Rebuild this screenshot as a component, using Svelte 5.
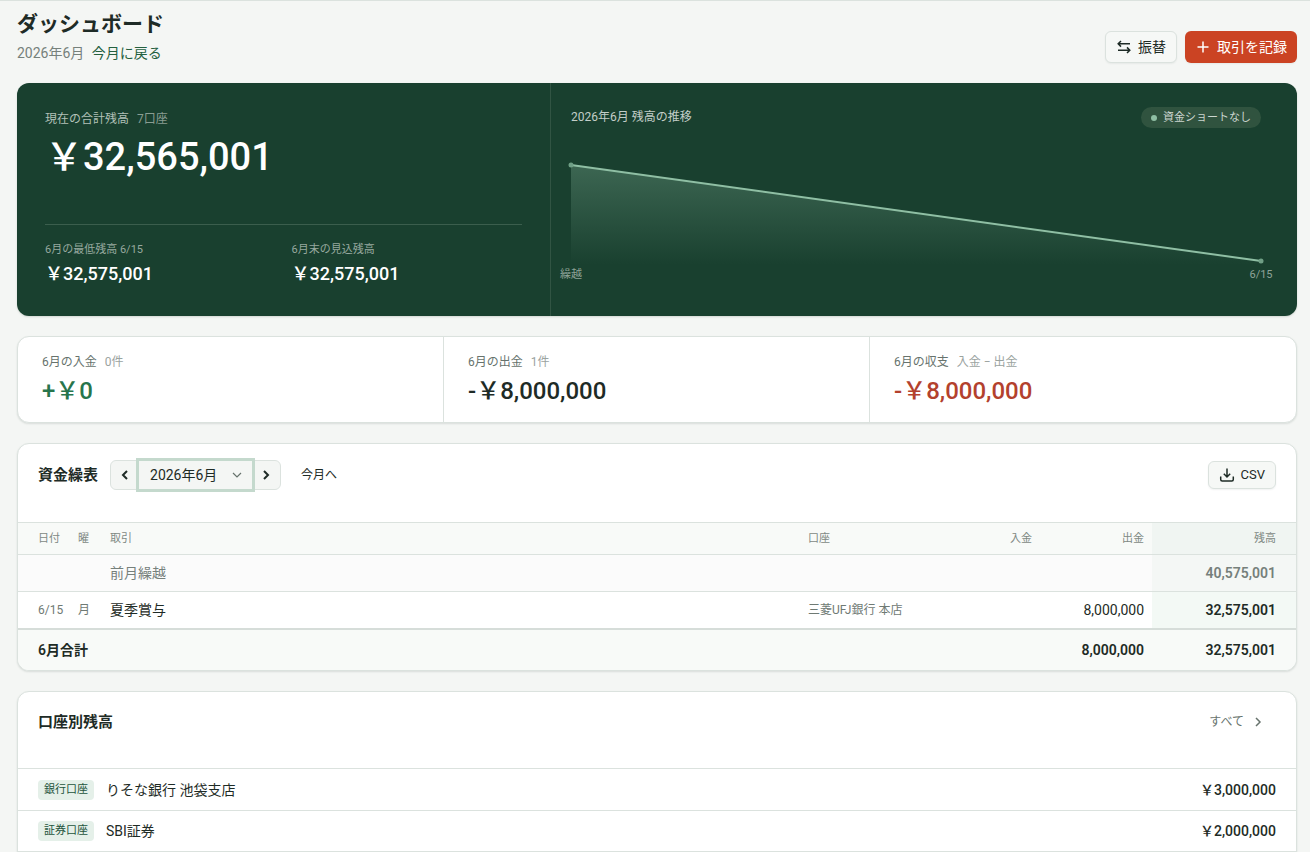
<script lang="ts">
    interface Entry {
        date: string;
        weekday: string;
        title: string;
        account: string;
        income: string;
        expense: string;
        balance: string;
    }

    const months = ["2026年6月"];
    let month = $state("2026年6月");
    let chartWidth = $state(690);

    const lows = [
        { label: "6月の最低残高", note: "6/15", value: "￥32,575,001" },
        { label: "6月末の見込残高", note: "", value: "￥32,575,001" }
    ];

    const stats = [
        { label: "6月の入金", note: "0件", value: "+￥0", tone: "plus" },
        { label: "6月の出金", note: "1件", value: "-￥8,000,000", tone: "" },
        { label: "6月の収支", note: "入金 − 出金", value: "-￥8,000,000", tone: "minus" }
    ];

    const entries: Entry[] = [
        {
            date: "6/15",
            weekday: "月",
            title: "夏季賞与",
            account: "三菱UFJ銀行 本店",
            income: "",
            expense: "8,000,000",
            balance: "32,575,001"
        }
    ];

    const accounts = [
        { kind: "銀行口座", name: "りそな銀行 池袋支店", balance: "￥3,000,000" },
        { kind: "証券口座", name: "SBI証券", balance: "￥2,000,000" }
    ];

    // y positions inside the chart
    const startY = 37;
    const endY = 133;
    const baseY = 137;
</script>

<main>
    <header class="page-head">
        <div>
            <h1>ダッシュボード</h1>
            <p class="period">{month} <a href="#now">今月に戻る</a></p>
        </div>
        <div class="actions">
            <button class="btn">
                <svg width="16" height="16" viewBox="0 0 16 16" aria-hidden="true">
                    <path d="M14 4.8H2.5M5 2L2.2 4.8L5 7.6M2 11.2H13.5M11 8.4L13.8 11.2L11 14" />
                </svg>
                振替
            </button>
            <button class="btn primary">
                <svg width="16" height="16" viewBox="0 0 16 16" aria-hidden="true">
                    <path d="M8 2.5V13.5M2.5 8H13.5" />
                </svg>
                取引を記録
            </button>
        </div>
    </header>

    <section class="hero">
        <div class="total">
            <div>
                <p class="total-label">現在の合計残高 <span>7口座</span></p>
                <p class="total-value">￥32,565,001</p>
            </div>
            <div class="lows">
                {#each lows as low}
                    <div>
                        <p class="low-label">{low.label} <span>{low.note}</span></p>
                        <p class="low-value">{low.value}</p>
                    </div>
                {/each}
            </div>
        </div>
        <div class="trend">
            <div class="trend-head">
                <h2>{month} 残高の推移</h2>
                <span class="pill">資金ショートなし</span>
            </div>
            <div class="chart" bind:clientWidth={chartWidth}>
                <svg width={chartWidth} height="164" role="img" aria-label="残高の推移">
                    <defs>
                        <linearGradient id="fade" gradientUnits="userSpaceOnUse" x1="0" y1={startY} x2="0" y2={baseY}>
                            <stop offset="0" stop-color="#8fbfa4" stop-opacity="0.3" />
                            <stop offset="1" stop-color="#8fbfa4" stop-opacity="0" />
                        </linearGradient>
                    </defs>
                    <polygon points="0,{startY} {chartWidth},{endY} {chartWidth},{baseY} 0,{baseY}" fill="url(#fade)" />
                    <line x1="0" y1={startY} x2={chartWidth} y2={endY} />
                    <circle cx="0" cy={startY} r="2.5" />
                    <circle cx={chartWidth} cy={endY} r="2.5" />
                    <text x="0" y="150">繰越</text>
                    <text x={chartWidth} y="150">6/15</text>
                </svg>
            </div>
        </div>
    </section>

    <section class="card stats">
        {#each stats as stat}
            <div class="stat">
                <p class="stat-label">{stat.label} <span>{stat.note}</span></p>
                <p class="stat-value {stat.tone}">{stat.value}</p>
            </div>
        {/each}
    </section>

    <section class="card">
        <div class="card-head">
            <h2>資金繰表</h2>
            <div class="stepper">
                <button aria-label="前の月">
                    <svg width="14" height="14" viewBox="0 0 14 14"><path d="M9 3L5 7L9 11" /></svg>
                </button>
                <div class="month">
                    <select aria-label="表示する月" bind:value={month}>
                        {#each months as m}
                            <option value={m}>{m}</option>
                        {/each}
                    </select>
                    <svg width="14" height="14" viewBox="0 0 14 14" aria-hidden="true"><path d="M3 5L7 9L11 5" /></svg>
                </div>
                <button aria-label="次の月">
                    <svg width="14" height="14" viewBox="0 0 14 14"><path d="M5 3L9 7L5 11" /></svg>
                </button>
            </div>
            <button class="this-month">今月へ</button>
            <button class="btn small">
                <svg width="16" height="16" viewBox="0 0 16 16" aria-hidden="true">
                    <path d="M8 1.5V9.5M4.8 6.8L8 10L11.2 6.8M1.7 9.5V12.5Q1.7 14 3.2 14H12.8Q14.3 14 14.3 12.5V9.5" />
                </svg>
                CSV
            </button>
        </div>
        <table>
            <thead>
                <tr>
                    <th class="date">日付</th>
                    <th class="weekday">曜</th>
                    <th>取引</th>
                    <th class="account">口座</th>
                    <th class="num">入金</th>
                    <th class="num">出金</th>
                    <th class="num balance">残高</th>
                </tr>
            </thead>
            <tbody>
                <tr class="carry">
                    <td class="date"></td>
                    <td></td>
                    <td>前月繰越</td>
                    <td></td>
                    <td></td>
                    <td></td>
                    <td class="num balance">40,575,001</td>
                </tr>
                {#each entries as entry}
                    <tr>
                        <td class="date">{entry.date}</td>
                        <td class="weekday">{entry.weekday}</td>
                        <td>{entry.title}</td>
                        <td class="account">{entry.account}</td>
                        <td class="num">{entry.income}</td>
                        <td class="num">{entry.expense}</td>
                        <td class="num balance">{entry.balance}</td>
                    </tr>
                {/each}
            </tbody>
            <tfoot>
                <tr>
                    <th colspan="4" scope="row">6月合計</th>
                    <td></td>
                    <td class="num">8,000,000</td>
                    <td class="num balance">32,575,001</td>
                </tr>
            </tfoot>
        </table>
    </section>

    <section class="card accounts">
        <div class="card-head">
            <h2>口座別残高</h2>
            <a class="all" href="#accounts">
                すべて
                <svg width="16" height="16" viewBox="0 0 16 16" aria-hidden="true"><path d="M6 4L10 8L6 12" /></svg>
            </a>
        </div>
        <ul>
            {#each accounts as account}
                <li>
                    <span class="kind">{account.kind}</span>
                    <span class="name">{account.name}</span>
                    <span class="amount">{account.balance}</span>
                </li>
            {/each}
        </ul>
    </section>
</main>

<style>
    :global(body) {
        background: #f4f6f4;
        color: #1e2b26;
        font-family: Roboto, "Noto Sans CJK JP", sans-serif;
        font-size: 14px;
        line-height: 20px;
    }

    main {
        display: flex;
        flex-direction: column;
        gap: 20px;
        padding: 8px 13px 0 17px;
        border-top: 1px solid #dbe2de;
    }

    h1, h2, p, ul {
        margin: 0;
        padding: 0;
    }

    button, select {
        font: inherit;
        color: inherit;
        cursor: pointer;
    }

    a {
        color: #24603f;
        text-decoration: none;
    }

    svg {
        flex: none;
        fill: none;
        stroke: currentColor;
        stroke-width: 1.5;
    }

    .page-head {
        display: flex;
        justify-content: space-between;
        align-items: flex-end;
    }

    h1 {
        font-size: 21px;
        font-weight: 600;
        line-height: 30px;
    }

    .period {
        margin-top: 4px;
        color: #76817b;
    }

    .period a {
        margin-left: 4px;
    }

    .actions {
        display: flex;
        gap: 8px;
    }

    .btn {
        display: flex;
        align-items: center;
        gap: 6px;
        height: 32px;
        padding: 0 10px;
        border: 1px solid #dbe2de;
        border-radius: 6px;
        background: #f6f8f6;
        box-shadow: 0 1px 2px rgba(20, 40, 30, 0.06);
    }

    .btn.primary {
        border: none;
        background: #cb4323;
        color: #fff;
    }

    .btn.small {
        height: 28px;
        margin-left: auto;
        font-size: 13px;
    }

    .hero {
        display: grid;
        grid-template-columns: 5fr 7fr;
        border-radius: 12px;
        background: #19402f;
        color: #fff;
        box-shadow: 0 1px 2px rgba(20, 40, 30, 0.15);
    }

    .total {
        display: flex;
        flex-direction: column;
        justify-content: space-between;
        padding: 24px 28px 28px;
    }

    .total-label {
        font-size: 12px;
        line-height: 24px;
        color: #b2c0b8;
    }

    .total-label span {
        margin-left: 5px;
        color: #899d92;
    }

    .total-value {
        font-size: 38px;
        font-weight: 500;
        line-height: 52px;
    }

    .lows {
        display: grid;
        grid-template-columns: 1fr 1fr;
        gap: 16px;
        padding-top: 15px;
        border-top: 1px solid #3b5e4d;
    }

    .low-label {
        font-size: 11px;
        color: #97a99f;
    }

    .low-value {
        font-size: 18px;
        font-weight: 500;
        line-height: 28px;
    }

    .trend {
        padding: 24px 36px 24px 20px;
        border-left: 1px solid #315443;
    }

    .trend-head {
        display: flex;
        justify-content: space-between;
        height: 21px;
    }

    .trend-head h2 {
        font-size: 12px;
        font-weight: 400;
        color: #c3cec8;
    }

    .pill {
        display: flex;
        align-items: center;
        gap: 6px;
        padding: 0 10px;
        border-radius: 11px;
        background: #30533f;
        font-size: 11px;
        color: #ccd6d0;
    }

    .pill::before {
        content: "";
        width: 6px;
        height: 6px;
        border-radius: 50%;
        background: #8fbfa4;
    }

    .chart svg {
        display: block;
        overflow: visible;
        stroke: none;
    }

    .chart line {
        stroke: #8fbfa4;
        stroke-width: 2;
    }

    .chart circle {
        fill: #6f9f86;
    }

    .chart text {
        fill: #8fa398;
        font-size: 11px;
        text-anchor: middle;
    }

    .card {
        overflow: hidden;
        border: 1px solid #dbe2de;
        border-radius: 12px;
        background: #fff;
        box-shadow: 0 1px 2px rgba(20, 40, 30, 0.12);
    }

    .stats {
        display: grid;
        grid-template-columns: repeat(3, 1fr);
    }

    .stat {
        padding: 15px 24px 13px;
    }

    .stat + .stat {
        box-shadow: -1px 0 #dbe2de;
    }

    .stat-label {
        font-size: 12px;
        color: #67736d;
    }

    .stat-label span {
        margin-left: 5px;
        color: #9ba39f;
    }

    .stat-value {
        margin-top: 1px;
        font-size: 24px;
        font-weight: 500;
        line-height: 36px;
    }

    .plus {
        color: #27754c;
    }

    .minus {
        color: #b3412d;
    }

    .card-head {
        display: flex;
        align-items: center;
        padding: 16px 20px 32px;
    }

    .card-head h2 {
        font-size: 15px;
        font-weight: 600;
    }

    .stepper {
        display: flex;
        margin-left: 12px;
        border: 1px solid #dbe2de;
        border-radius: 6px;
        background: #f4f6f4;
    }

    .stepper button {
        display: flex;
        align-items: center;
        justify-content: center;
        width: 28px;
        padding: 0;
        border: none;
        background: none;
    }

    .stepper button svg {
        stroke-width: 2;
    }

    .month {
        position: relative;
        z-index: 1;
        display: flex;
        width: 113px;
        height: 28px;
        box-shadow: 0 0 0 3px #c4d9cd;
    }

    .month select {
        width: 100%;
        padding: 0 11px;
        border: none;
        outline: none;
        border-radius: 0;
        background: #f4f6f4;
        appearance: none;
    }

    .month svg {
        position: absolute;
        top: 7px;
        right: 8px;
        color: #67736d;
        pointer-events: none;
        stroke-width: 1.2;
    }

    .this-month {
        margin-left: 20px;
        padding: 0;
        border: none;
        background: none;
        font-size: 12px;
    }

    table {
        width: 100%;
        border-collapse: collapse;
        table-layout: fixed;
    }

    th, td {
        height: 36px;
        padding: 0 8px;
        text-align: left;
        font-weight: 400;
    }

    thead th {
        height: 31px;
        border-top: 1px solid #dbe2de;
        background: #f8faf8;
        font-size: 11px;
        color: #7f8984;
    }

    tbody td {
        border-top: 1px solid #dbe2de;
    }

    tbody .date, tbody .weekday, tbody .account {
        font-size: 12px;
        color: #6f7a74;
    }

    th.date {
        width: 24px;
    }

    .date, tfoot th {
        padding-left: 20px;
    }

    th.weekday {
        width: 16px;
    }

    th.account {
        width: 112px;
    }

    th.num {
        width: 96px;
    }

    .num {
        text-align: right;
    }

    th.balance {
        width: 116px;
        background: #f0f5f2;
    }

    .balance {
        padding-right: 20px;
        font-weight: 600;
    }

    thead .balance {
        font-weight: 400;
    }

    tbody .balance {
        background: #f3f9f5;
    }

    .carry {
        background: #fbfbfb;
        color: #76807b;
    }

    .carry .balance {
        background: #f4f7f5;
    }

    tfoot th, tfoot td {
        height: 40px;
        border-top: 2px solid #d6ddd9;
        background: #f8faf8;
        font-weight: 600;
    }

    .all {
        display: flex;
        align-items: center;
        gap: 6px;
        margin-left: auto;
        padding: 0 10px;
        font-size: 12px;
        color: #67736d;
    }

    .accounts .card-head {
        min-height: 28px;
    }

    .accounts ul {
        padding-bottom: 12px;
        list-style: none;
    }

    .accounts li {
        display: flex;
        align-items: center;
        gap: 12px;
        height: 41px;
        padding: 0 20px;
        border-top: 1px solid #dbe2de;
    }

    .accounts li:last-child {
        height: 40px;
        border-bottom: 1px solid #dbe2de;
    }

    .kind {
        padding: 0 6px;
        border-radius: 4px;
        background: #e5f0e9;
        font-size: 11px;
        color: #24543c;
    }

    .amount {
        margin-left: auto;
        font-weight: 500;
    }
</style>
